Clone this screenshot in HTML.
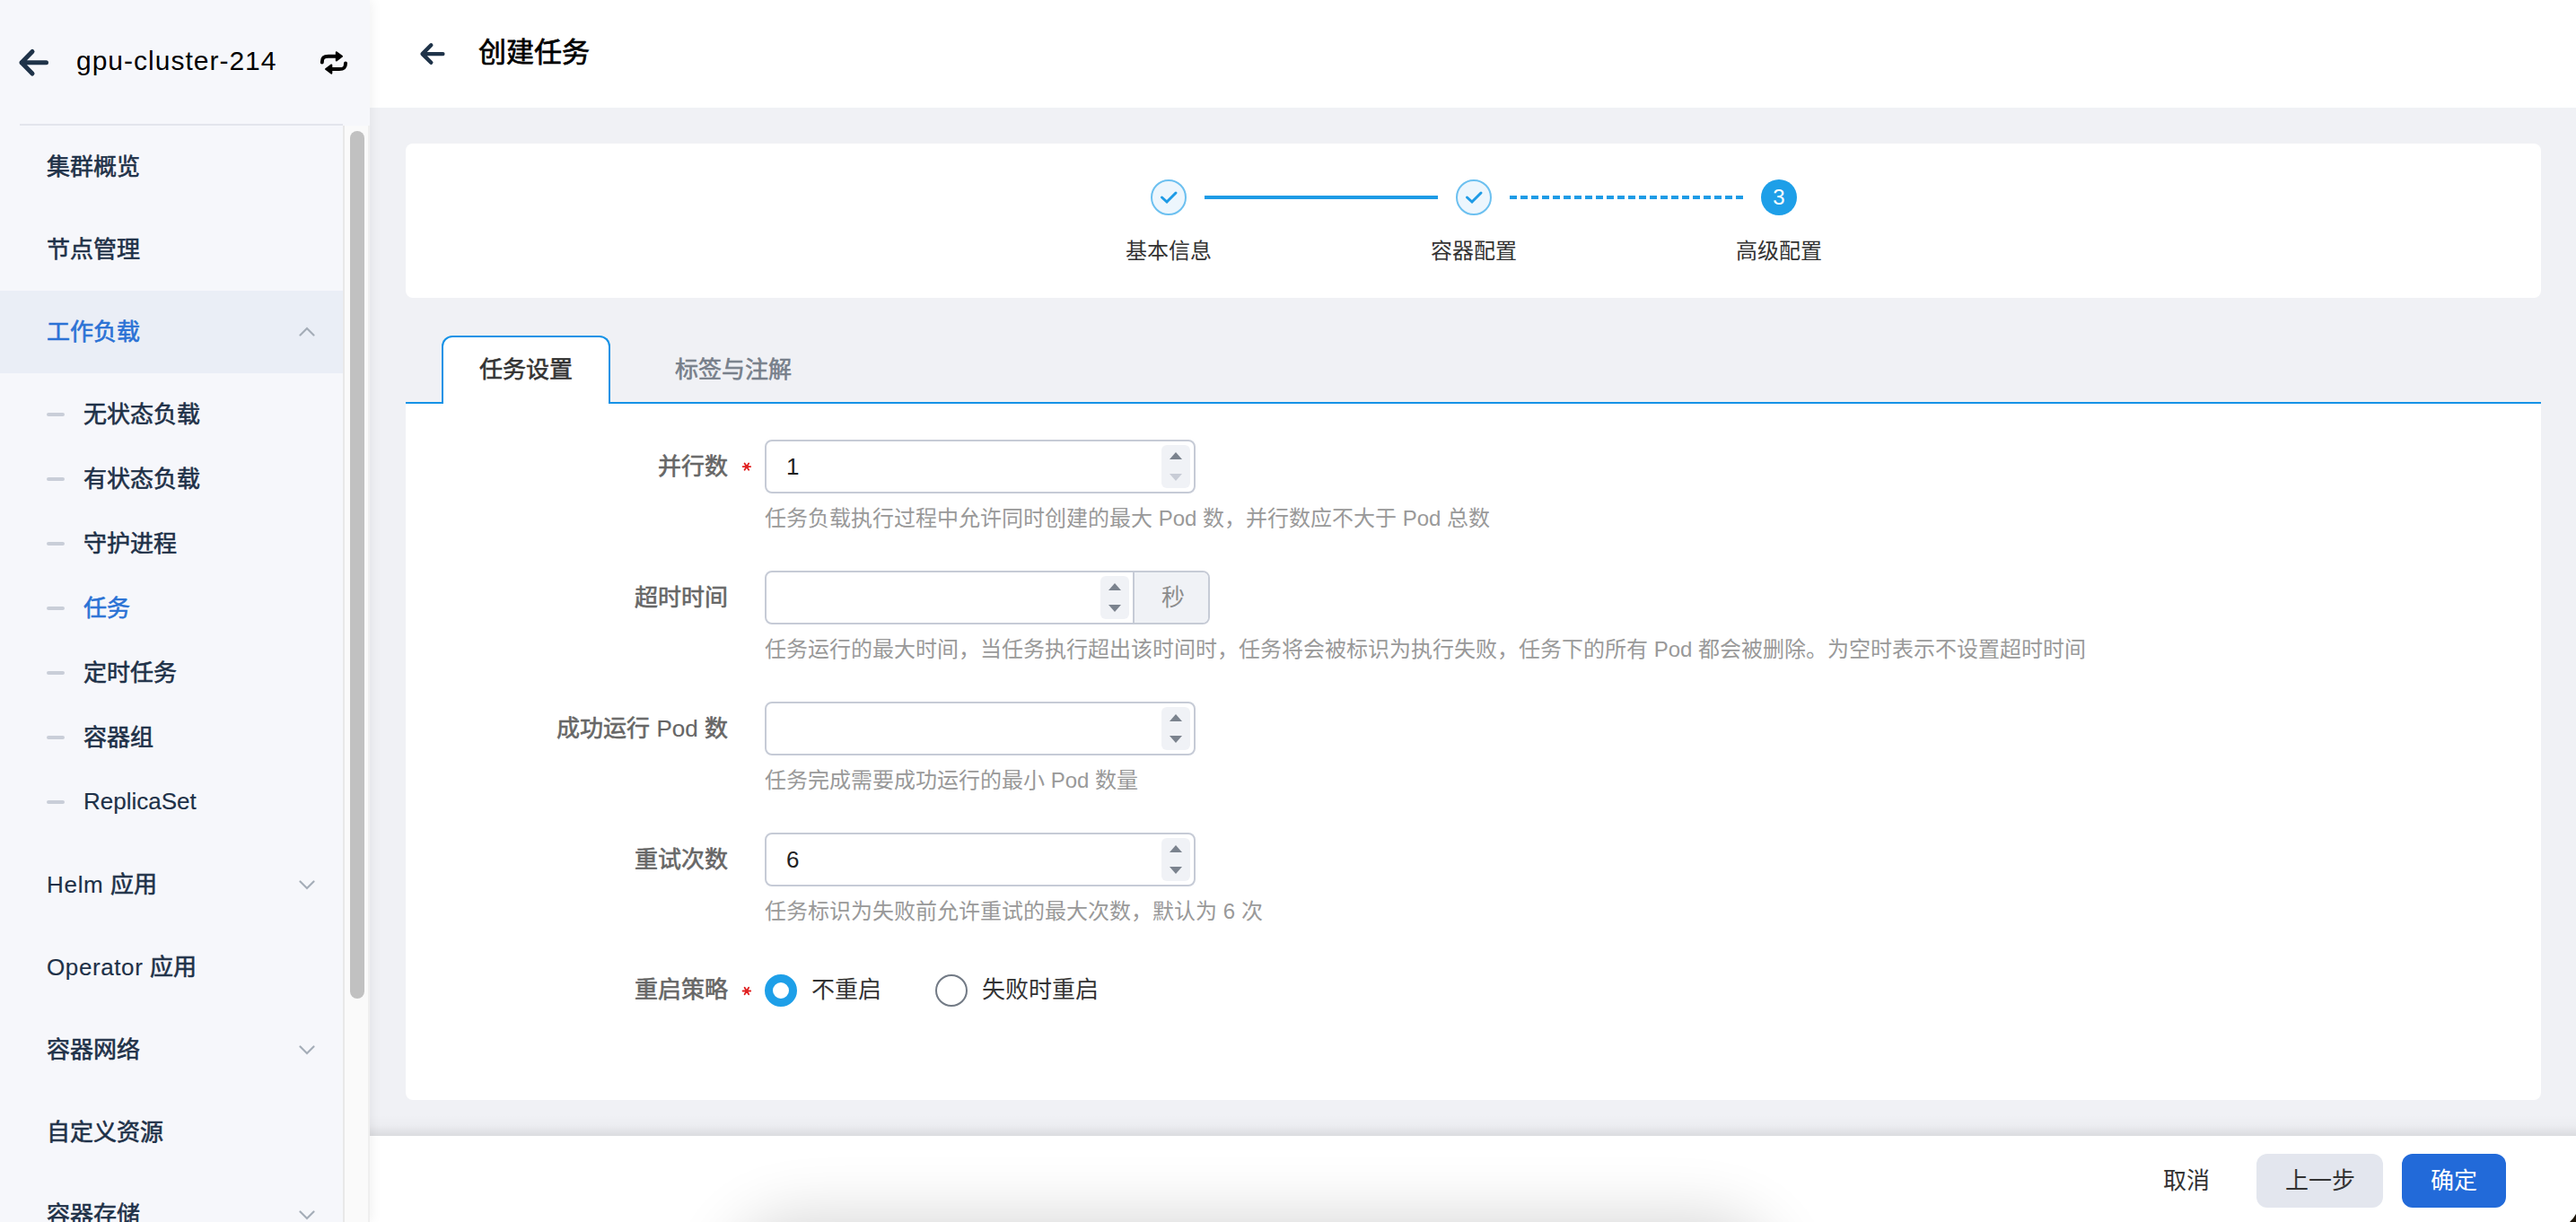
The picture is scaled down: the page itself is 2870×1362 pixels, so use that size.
<!DOCTYPE html>
<html lang="zh-CN"><head><meta charset="utf-8">
<style>
*{margin:0;padding:0;box-sizing:border-box}
html,body{width:2870px;height:1362px;overflow:hidden;background:#f0f1f5;font-family:"Liberation Sans",sans-serif}
.a{position:absolute}
.sb{left:0;top:0;width:412px;height:1362px;background:#f6f7fb;box-shadow:2px 0 12px rgba(0,0,0,0.06)}
.sbh{left:22px;top:138px;width:360px;height:2px;background:#e3e5ec}
.track{left:382px;top:140px;width:30px;height:1222px;background:#fafafa;border-left:2px solid #e8e8e8;border-right:2px solid #efefef}
.thumb{left:390px;top:146px;width:16px;height:967px;background:#c1c1c1;border-radius:8px}
.mi{left:0;width:382px;height:92px;font-size:26px;-webkit-text-stroke:0.6px currentColor;color:#1e3148;line-height:92px;padding-left:52px;white-space:nowrap}
.si{left:0;width:382px;height:72px;font-size:26px;-webkit-text-stroke:0.6px currentColor;color:#1e3148;line-height:72px;padding-left:93px;white-space:nowrap}
.dash{left:52px;width:20px;height:4px;border-radius:2px;background:#c9ced8}
.chev{left:333px;width:18px;height:11px}
.hdr{left:412px;top:0;width:2458px;height:120px;background:#fff}
.card{background:#fff;border-radius:8px}
.lbl{font-size:26px;-webkit-text-stroke:0.6px currentColor;color:#666;text-align:right;width:300px;left:511px;white-space:nowrap}
.req{color:#e02424;font-size:24px}
.inp{left:852px;width:480px;height:60px;border:2px solid #c6cbd6;border-radius:8px;background:#fff}
.spin{width:32px;height:48px;background:#f0f2f6;border-radius:6px}
.lt{-webkit-text-stroke:0.15px currentColor}
.help{left:852px;font-size:24px;color:#999;white-space:nowrap;line-height:30px}
</style></head>
<body>
<!-- header -->
<div class="a hdr"></div>
<svg class="a" style="left:460px;top:40px" width="45" height="40" viewBox="460 40 45 40"><path d="M480.3 50.3 L470.6 60.1 L480.3 69.8 M470.6 60.1 H493.4" fill="none" stroke="#1f3349" stroke-width="4.4" stroke-linecap="round" stroke-linejoin="round"/></svg>
<div class="a" style="left:533px;top:39px;font-size:31px;line-height:40px;-webkit-text-stroke:0.7px #000;color:#000">创建任务</div>

<!-- step card -->
<div class="a card" style="left:452px;top:160px;width:2379px;height:172px"></div>
<div class="a" style="left:1282px;top:200px;width:40px;height:40px;border-radius:50%;border:2px solid #6cc0f0;background:#edf6fd"></div>
<svg class="a" style="left:1290px;top:210px" width="24" height="20" viewBox="0 0 24 20"><path d="M4.5 10 L10 15 L20 5" fill="none" stroke="#1e9be6" stroke-width="3" stroke-linecap="round"/></svg>
<div class="a" style="left:1342px;top:218px;width:260px;height:4px;background:#1e9be6"></div>
<div class="a" style="left:1622px;top:200px;width:40px;height:40px;border-radius:50%;border:2px solid #6cc0f0;background:#edf6fd"></div>
<svg class="a" style="left:1630px;top:210px" width="24" height="20" viewBox="0 0 24 20"><path d="M4.5 10 L10 15 L20 5" fill="none" stroke="#1e9be6" stroke-width="3" stroke-linecap="round"/></svg>
<div class="a" style="left:1682px;top:218px;width:260px;height:4px;background:repeating-linear-gradient(90deg,#1e9be6 0 8px,transparent 8px 12px)"></div>
<div class="a" style="left:1962px;top:200px;width:40px;height:40px;border-radius:50%;background:#1e9fe8;color:#fff;font-size:24px;line-height:40px;text-align:center">3</div>
<div class="a" style="left:1202px;top:262px;width:200px;text-align:center;font-size:24px;line-height:36px;color:#333">基本信息</div>
<div class="a" style="left:1542px;top:262px;width:200px;text-align:center;font-size:24px;line-height:36px;color:#333">容器配置</div>
<div class="a" style="left:1882px;top:262px;width:200px;text-align:center;font-size:24px;line-height:36px;color:#333">高级配置</div>

<!-- tabs -->
<div class="a" style="left:452px;top:448px;width:2379px;height:2px;background:#1592e6"></div>
<div class="a" style="left:492px;top:374px;width:188px;height:78px;border:2px solid #1592e6;border-bottom:none;border-radius:12px 12px 0 0;background:#fff"></div>
<div class="a" style="left:492px;top:374px;width:188px;height:76px;text-align:center;font-size:26px;line-height:76px;color:#333;-webkit-text-stroke:0.6px #333">任务设置</div>
<div class="a" style="left:752px;top:374px;font-size:26px;line-height:76px;color:#777f8a;-webkit-text-stroke:0.6px #777f8a">标签与注解</div>

<!-- form card -->
<div class="a card" style="left:452px;top:450px;width:2379px;height:776px;border-radius:0 0 8px 8px"></div>

<div class="a lbl" style="top:500px;line-height:40px">并行数</div>
<svg class="a" style="left:822px;top:510px" width="20" height="20" viewBox="822 510 20 20"><path d="M827.6 520.1 H836.2 M829.6 516.4 L834.2 523.8 M834.2 516.4 L829.6 523.8" stroke="#e02020" stroke-width="1.8" stroke-linecap="round" fill="none"/></svg>
<div class="a inp" style="top:490px"></div>
<div class="a" style="left:876px;top:500px;font-size:26px;line-height:40px;color:#222">1</div>
<div class="a spin" style="left:1294px;top:496px"></div>
<svg class="a" style="left:1303px;top:504px" width="14" height="8"><path d="M7 0 L14 8 H0Z" fill="#7b838e"/></svg>
<svg class="a" style="left:1303px;top:528px" width="14" height="8"><path d="M0 0 H14 L7 8Z" fill="#c8ccd6"/></svg>
<div class="a help" style="top:563px">任务负载执行过程中允许同时创建的最大 Pod 数，并行数应不大于 Pod 总数</div>

<div class="a lbl" style="top:646px;line-height:40px">超时时间</div>
<div class="a inp" style="top:636px;width:496px;overflow:hidden"><div class="a" style="left:408px;top:0;width:84px;height:56px;background:#f0f2f6;border-left:2px solid #c6cbd6"></div></div>
<div class="a" style="left:1266px;top:646px;width:82px;text-align:center;font-size:26px;line-height:40px;color:#8c8c8c">秒</div>
<div class="a spin" style="left:1226px;top:642px"></div>
<svg class="a" style="left:1235px;top:650px" width="14" height="8"><path d="M7 0 L14 8 H0Z" fill="#7b838e"/></svg>
<svg class="a" style="left:1235px;top:674px" width="14" height="8"><path d="M0 0 H14 L7 8Z" fill="#7b838e"/></svg>
<div class="a help" style="top:709px">任务运行的最大时间，当任务执行超出该时间时，任务将会被标识为执行失败，任务下的所有 Pod 都会被删除。为空时表示不设置超时时间</div>

<div class="a lbl" style="top:792px;line-height:40px">成功运行 <span class="lt">Pod</span> 数</div>
<div class="a inp" style="top:782px"></div>
<div class="a spin" style="left:1294px;top:788px"></div>
<svg class="a" style="left:1303px;top:796px" width="14" height="8"><path d="M7 0 L14 8 H0Z" fill="#7b838e"/></svg>
<svg class="a" style="left:1303px;top:820px" width="14" height="8"><path d="M0 0 H14 L7 8Z" fill="#7b838e"/></svg>
<div class="a help" style="top:855px">任务完成需要成功运行的最小 Pod 数量</div>

<div class="a lbl" style="top:938px;line-height:40px">重试次数</div>
<div class="a inp" style="top:928px"></div>
<div class="a" style="left:876px;top:938px;font-size:26px;line-height:40px;color:#222">6</div>
<div class="a spin" style="left:1294px;top:934px"></div>
<svg class="a" style="left:1303px;top:942px" width="14" height="8"><path d="M7 0 L14 8 H0Z" fill="#7b838e"/></svg>
<svg class="a" style="left:1303px;top:966px" width="14" height="8"><path d="M0 0 H14 L7 8Z" fill="#7b838e"/></svg>
<div class="a help" style="top:1001px">任务标识为失败前允许重试的最大次数，默认为 6 次</div>

<div class="a lbl" style="top:1083px;line-height:40px">重启策略</div>
<svg class="a" style="left:822px;top:1094px" width="20" height="20" viewBox="822 1094 20 20"><path d="M827.6 1104.5 H836.2 M829.6 1100.8 L834.2 1108.2 M834.2 1100.8 L829.6 1108.2" stroke="#e02020" stroke-width="1.8" stroke-linecap="round" fill="none"/></svg>
<div class="a" style="left:852px;top:1086px;width:36px;height:36px;border-radius:50%;border:9.5px solid #1e9fe8;background:#fff"></div>
<div class="a" style="left:904px;top:1083px;font-size:26px;line-height:40px;color:#333">不重启</div>
<div class="a" style="left:1042px;top:1086px;width:36px;height:36px;border-radius:50%;border:2px solid #727a85;background:#fff"></div>
<div class="a" style="left:1094px;top:1083px;font-size:26px;line-height:40px;color:#333">失败时重启</div>

<!-- footer -->
<div class="a" style="left:412px;top:1242px;width:2458px;height:24px;background:linear-gradient(180deg,rgba(0,0,0,0) 0%,rgba(0,0,0,0.015) 50%,rgba(0,0,0,0.09) 100%)"></div>
<div class="a" style="left:412px;top:1266px;width:2458px;height:96px;background:#fff"></div>
<div class="a" style="left:2380px;top:1296px;width:112px;text-align:center;font-size:26px;line-height:40px;color:#333">取消</div>
<div class="a" style="left:2514px;top:1286px;width:141px;height:60px;border-radius:12px;background:#e3e6ee;text-align:center;font-size:26px;line-height:60px;color:#333">上一步</div>
<div class="a" style="left:2676px;top:1286px;width:116px;height:60px;border-radius:12px;background:#226ad9;text-align:center;font-size:26px;line-height:60px;color:#fff">确定</div>
<div class="a" style="left:0;top:1266px;width:2870px;height:96px;overflow:hidden"><div class="a" style="left:850px;top:130px;width:1090px;height:80px;border-radius:40px;background:#000;box-shadow:0 0 70px 40px rgba(0,0,0,0.16);opacity:1"></div></div>
<svg class="a" style="left:2850px;top:1342px" width="20" height="20" viewBox="2850 1342 20 20"><path d="M2870 1353 L2870 1362 L2863 1362 Q2867 1358.5 2870 1353 Z" fill="#1b1409"/></svg>
<div class="a" style="left:0;top:0;width:412px;height:1362px;z-index:5">
<!-- sidebar -->
<div class="a sb"></div>
<svg class="a" style="left:0;top:0" width="412" height="120" viewBox="0 0 412 120">
<path d="M36 57.5 L24 69.7 L36 82 M24 69.7 H51.5" fill="none" stroke="#1f3349" stroke-width="5" stroke-linecap="round" stroke-linejoin="round"/>
<path d="M358.8 69.4 C358.8 64.5 360.5 62.8 366 62.8 H375" fill="none" stroke="#000" stroke-width="4" stroke-linecap="round"/>
<path d="M374.8 58.2 L381 62.8 L374.8 67.4 Z" fill="#000" stroke="#000" stroke-width="2" stroke-linejoin="round"/>
<path d="M385 70.5 C385 75.5 383.3 77 378 77 H369" fill="none" stroke="#000" stroke-width="4" stroke-linecap="round"/>
<path d="M369.3 72.4 L363 77 L369.3 81.6 Z" fill="#000" stroke="#000" stroke-width="2" stroke-linejoin="round"/>
</svg>
<div class="a" style="left:85px;top:48px;font-size:30px;line-height:40px;color:#000;letter-spacing:1px">gpu-cluster-214</div>
<div class="a sbh"></div>
<div class="a track"></div>
<div class="a thumb"></div>

<div class="a mi" style="top:140px">集群概览</div>
<div class="a mi" style="top:232px">节点管理</div>
<div class="a mi" style="top:324px;background:#eaeef6;color:#2a72d5">工作负载</div>
<svg class="a chev" style="top:364px" viewBox="0 0 18 11"><path d="M1.5 9.5 L9 2 L16.5 9.5" fill="none" stroke="#a5adb8" stroke-width="2.2" stroke-linecap="round"/></svg>

<div class="a dash" style="top:460px"></div><div class="a si" style="top:426px">无状态负载</div>
<div class="a dash" style="top:532px"></div><div class="a si" style="top:498px">有状态负载</div>
<div class="a dash" style="top:604px"></div><div class="a si" style="top:570px">守护进程</div>
<div class="a dash" style="top:676px"></div><div class="a si" style="top:642px;color:#2a72d5">任务</div>
<div class="a dash" style="top:748px"></div><div class="a si" style="top:714px">定时任务</div>
<div class="a dash" style="top:820px"></div><div class="a si" style="top:786px">容器组</div>
<div class="a dash" style="top:892px"></div><div class="a si" style="top:858px"><span class="lt" style="position:relative;top:-1px">ReplicaSet</span></div>

<div class="a mi" style="top:940px"><span class="lt" style="letter-spacing:0.7px">Helm</span> 应用</div>
<svg class="a chev" style="top:981px" viewBox="0 0 18 11"><path d="M1.5 1.5 L9 9 L16.5 1.5" fill="none" stroke="#a5adb8" stroke-width="2.2" stroke-linecap="round"/></svg>
<div class="a mi" style="top:1032px"><span class="lt" style="letter-spacing:0.6px">Operator</span> 应用</div>
<div class="a mi" style="top:1124px">容器网络</div>
<svg class="a chev" style="top:1165px" viewBox="0 0 18 11"><path d="M1.5 1.5 L9 9 L16.5 1.5" fill="none" stroke="#a5adb8" stroke-width="2.2" stroke-linecap="round"/></svg>
<div class="a mi" style="top:1216px">自定义资源</div>
<div class="a mi" style="top:1308px">容器存储</div>
<svg class="a chev" style="top:1349px" viewBox="0 0 18 11"><path d="M1.5 1.5 L9 9 L16.5 1.5" fill="none" stroke="#a5adb8" stroke-width="2.2" stroke-linecap="round"/></svg>

</div>
</body></html>
